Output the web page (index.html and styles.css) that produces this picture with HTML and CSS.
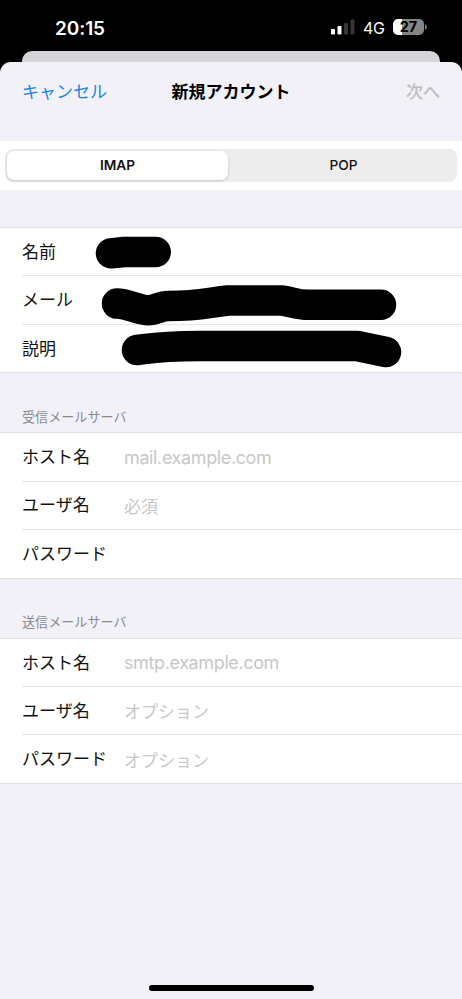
FILE: index.html
```html
<!DOCTYPE html>
<html lang="ja">
<head>
<meta charset="utf-8">
<title>新規アカウント</title>
<link rel="stylesheet" href="styles.css">
</head>
<body>
<div class="phone">
  <header class="status">
    <span class="time">20:15</span>
    <div class="indicators">
      <svg class="signal" width="24" height="16" viewBox="0 0 24 16">
        <rect x="0" y="10" width="4" height="5.5" rx="1" fill="#fff"/>
        <rect x="6.5" y="7" width="4" height="8.5" rx="1" fill="#fff"/>
        <rect x="13" y="4" width="4" height="11.5" rx="1" fill="#363636"/>
        <rect x="19.5" y="0.5" width="4" height="15" rx="1" fill="#363636"/>
      </svg>
      <span class="network">4G</span>
      <div class="battery"><span class="level">27</span></div>
      <svg class="cap" width="3" height="6" viewBox="0 0 3 6"><path d="M0 0Q2 .8 2 3T0 6Z" fill="#777"/></svg>
    </div>
  </header>
  <div class="back-card"></div>
  <main class="sheet">
    <nav class="nav">
      <span class="cancel">キャンセル</span>
      <h1 class="title">新規アカウント</h1>
      <span class="next">次へ</span>
    </nav>
    <div class="segment-bar">
      <div class="segments">
        <span class="segment selected">IMAP</span>
        <span class="segment">POP</span>
      </div>
    </div>
    <section class="group account">
      <div class="row"><span class="label">名前</span></div>
      <div class="row"><span class="label">メール</span></div>
      <div class="row"><span class="label">説明</span></div>
      <svg class="marker" width="462" height="146" viewBox="0 227 462 146">
        <path d="M111 253.3L124 252H155.7"/>
        <path d="M117 303.6C127 303.6 140 310.3 148 310.3S160 306 168 306C201 306 205 303 228 300.5H281C290 301 296 304.8 308 304.8H381"/>
        <path d="M137 350C150 348.5 157 346.2 200 346H357L386 352"/>
      </svg>
    </section>
    <h2 class="heading">受信メールサーバ</h2>
    <section class="group">
      <div class="row"><span class="label">ホスト名</span><span class="hint latin">mail.example.com</span></div>
      <div class="row"><span class="label">ユーザ名</span><span class="hint">必須</span></div>
      <div class="row"><span class="label">パスワード</span></div>
    </section>
    <h2 class="heading outgoing">送信メールサーバ</h2>
    <section class="group">
      <div class="row"><span class="label">ホスト名</span><span class="hint latin">smtp.example.com</span></div>
      <div class="row"><span class="label">ユーザ名</span><span class="hint">オプション</span></div>
      <div class="row"><span class="label">パスワード</span><span class="hint">オプション</span></div>
    </section>
    <div class="home"></div>
  </main>
</div>
</body>
</html>
```
FILE: styles.css
```css
* { box-sizing: border-box; }
body {
  margin: 0;
  background: #000;
  color: #111;
  font-family: Inter, "Noto Sans CJK JP", sans-serif;
  font-size: 17px;
}
.phone {
  width: 462px;
  height: 999px;
  display: flex;
  flex-direction: column;
  overflow: hidden;
}
.status {
  height: 51px;
  padding: 4px 34px 0 55px;
  display: flex;
  justify-content: space-between;
  color: #fff;
}
.time { font-size: 19px; font-weight: 600; line-height: 49px; letter-spacing: -0.1px; }
.indicators { display: flex; align-items: center; height: 46px; }
.network { font-size: 16px; line-height: 20px; margin: 2px 0 0 8px; width: 22px; letter-spacing: -0.3px; }
.battery {
  width: 31px;
  height: 16px;
  margin-left: 8px;
  border-radius: 5px;
  background: linear-gradient(to right, #fff 8.5px, #858585 8.5px);
  color: #000;
  text-align: center;
}
.level { display: block; font-size: 14.5px; font-weight: 700; line-height: 16px; }
.cap { margin-left: 1px; }
.back-card {
  height: 11px;
  margin: 0 22px;
  flex: none;
  border-radius: 10px 10px 0 0;
  background: #d5d4d9;
}
.sheet {
  flex: 1;
  display: flex;
  flex-direction: column;
  border-radius: 11px 11px 0 0;
  background: #f2f1f7;
}
.nav {
  height: 79px;
  flex: none;
  padding: 0 22px 22px;
  display: grid;
  grid-template-columns: 1fr auto 1fr;
  align-items: center;
}
.cancel { color: #1686e6; }
.title { margin: 0; font-size: 17px; font-weight: 700; color: #000; }
.next { text-align: right; color: #bcbcc0; font-weight: 500; }
.segment-bar {
  height: 49px;
  flex: none;
  padding: 8px 5px 8px;
  background: #fff;
}
.segments {
  height: 33px;
  padding: 2px;
  display: grid;
  grid-template-columns: 221px 1fr;
  column-gap: 4px;
  border-radius: 8px;
  background: #ededee;
}
.segment { text-align: center; font-size: 13.7px; font-weight: 500; line-height: 28px; color: #111; }
.selected {
  font-weight: 600;
  border-radius: 7px;
  background: #fff;
  box-shadow: 0 1px 3px rgba(0, 0, 0, .18);
}
.group {
  flex: none;
  background: #fff;
  border-top: 1px solid #e2e1e6;
  border-bottom: 1px solid #e2e1e6;
}
.account { position: relative; margin-top: 37px; }
.row {
  height: 48.3px;
  margin-left: 22px;
  padding-bottom: 3px;
  display: flex;
  align-items: center;
  border-bottom: 1px solid #e6e6e8;
}
.row:nth-child(3) { border-bottom: 0; height: 47.9px; }
.label { width: 102px; flex: none; }
.hint { color: #c7c7c9; padding-top: 3px; }
.latin { font-size: 18px; letter-spacing: -0.38px; }
.marker { position: absolute; left: 0; top: -1px; }
.marker path {
  fill: none;
  stroke: #000;
  stroke-width: 30.5px;
  stroke-linecap: round;
  stroke-linejoin: round;
}
.heading {
  height: 59px;
  margin: 0;
  padding: 34px 22px 0;
  flex: none;
  font-size: 13.1px;
  font-weight: 400;
  line-height: 20px;
  color: #8a8a8f;
}
.outgoing { height: 58.9px; padding-top: 33.5px; }
.home {
  width: 165px;
  height: 6px;
  margin: auto auto 8px 149px;
  border-radius: 3px;
  background: #000;
}
```
